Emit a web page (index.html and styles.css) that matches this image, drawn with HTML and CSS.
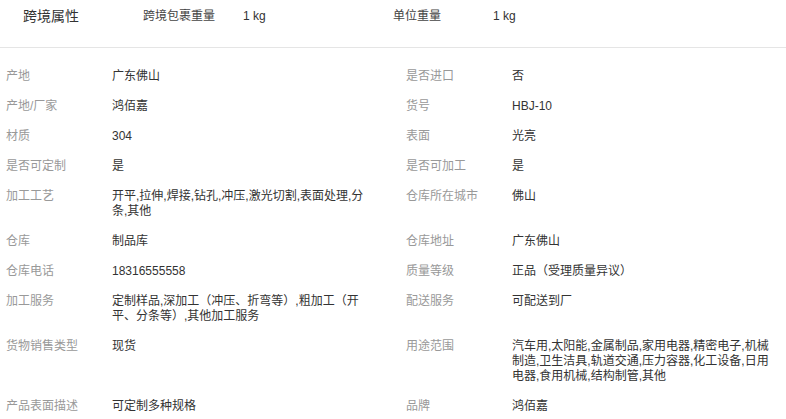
FILE: index.html
```
<!DOCTYPE html>
<html lang="zh-CN">
<head>
  <meta charset="UTF-8" />
  <title>商品属性</title>
  <link rel="stylesheet" href="styles.css">
</head>
<body>
  <div class="cross-border">
    <div class="cross-title">跨境属性</div>
    <div class="cross-item">
      <span class="cross-label">跨境包裹重量</span>
      <span class="cross-value">1 kg</span>
    </div>
    <div class="cross-item">
      <span class="cross-label">单位重量</span>
      <span class="cross-value">1 kg</span>
    </div>
  </div>

  <div class="attr-grid">
    <div class="attr"><span class="attr-label">产地</span><span class="attr-value">广东佛山</span></div>
    <div class="attr"><span class="attr-label">是否进口</span><span class="attr-value">否</span></div>
    <div class="attr"><span class="attr-label">产地/厂家</span><span class="attr-value">鸿佰嘉</span></div>
    <div class="attr"><span class="attr-label">货号</span><span class="attr-value">HBJ-10</span></div>
    <div class="attr"><span class="attr-label">材质</span><span class="attr-value">304</span></div>
    <div class="attr"><span class="attr-label">表面</span><span class="attr-value">光亮</span></div>
    <div class="attr"><span class="attr-label">是否可定制</span><span class="attr-value">是</span></div>
    <div class="attr"><span class="attr-label">是否可加工</span><span class="attr-value">是</span></div>
    <div class="attr"><span class="attr-label">加工工艺</span><span class="attr-value">开平,拉伸,焊接,钻孔,冲压,激光切割,表面处理,分条,其他</span></div>
    <div class="attr"><span class="attr-label">仓库所在城市</span><span class="attr-value">佛山</span></div>
    <div class="attr"><span class="attr-label">仓库</span><span class="attr-value">制品库</span></div>
    <div class="attr"><span class="attr-label">仓库地址</span><span class="attr-value">广东佛山</span></div>
    <div class="attr"><span class="attr-label">仓库电话</span><span class="attr-value">18316555558</span></div>
    <div class="attr"><span class="attr-label">质量等级</span><span class="attr-value">正品（受理质量异议）</span></div>
    <div class="attr"><span class="attr-label">加工服务</span><span class="attr-value">定制样品,深加工（冲压、折弯等）,粗加工（开平、分条等）,其他加工服务</span></div>
    <div class="attr"><span class="attr-label">配送服务</span><span class="attr-value">可配送到厂</span></div>
    <div class="attr"><span class="attr-label">货物销售类型</span><span class="attr-value">现货</span></div>
    <div class="attr"><span class="attr-label">用途范围</span><span class="attr-value">汽车用,太阳能,金属制品,家用电器,精密电子,机械制造,卫生洁具,轨道交通,压力容器,化工设备,日用电器,食用机械,结构制管,其他</span></div>
    <div class="attr"><span class="attr-label">产品表面描述</span><span class="attr-value">可定制多种规格</span></div>
    <div class="attr"><span class="attr-label">品牌</span><span class="attr-value">鸿佰嘉</span></div>
  </div>
</body>
</html>
```

FILE: styles.css
```
body {
  margin: 0;
  font-family: "Liberation Sans", "Noto Sans CJK SC", sans-serif;
  font-size: 12px;
  color: #333;
  background: #fff;
  overflow: hidden;
}

.cross-border {
  display: flex;
  align-items: flex-start;
  height: 39px;
  padding: 8px 0 0 23px;
  border-bottom: 1px solid #e5e5e5;
  margin-bottom: 14px;
  line-height: 16px;
}

.cross-title {
  width: 120px;
  font-size: 14px;
  color: #333;
}

.cross-item {
  display: flex;
}

.cross-label {
  width: 100px;
  color: #444;
}

.cross-value {
  width: 150px;
  color: #333;
}

.attr-grid {
  display: grid;
  grid-template-columns: 400px 1fr;
  padding-left: 6px;
  line-height: 15px;
}

.attr {
  display: flex;
  padding: 7px 0 8px;
}

.attr-label {
  width: 106px;
  flex-shrink: 0;
  color: #999;
}

.attr-value {
  width: 260px;
  color: #333;
}
```
